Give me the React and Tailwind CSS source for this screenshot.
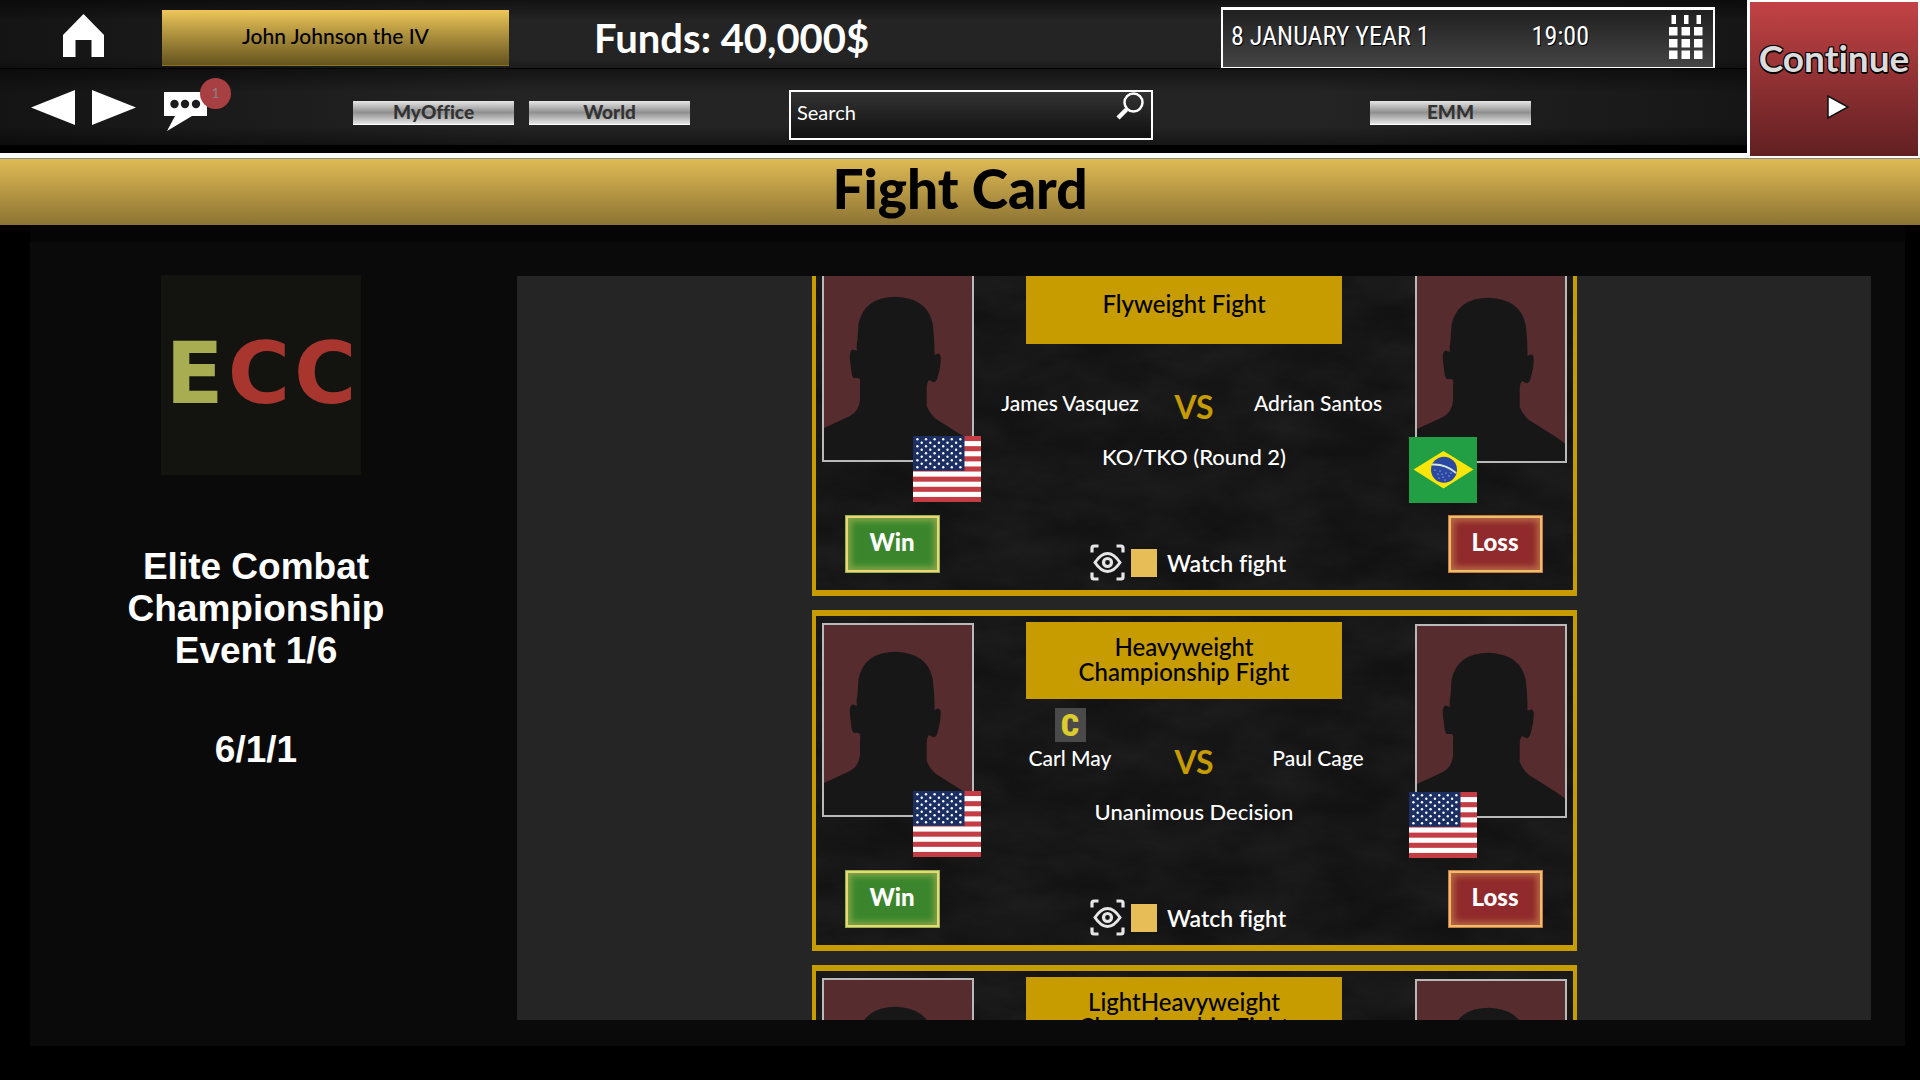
import React, { useState } from "react";

const FIGHTS = [
  {
    id: 1,
    title: ["Flyweight Fight"],
    left: { name: "James Vasquez", country: "US" },
    right: { name: "Adrian Santos", country: "BR" },
    method: "KO/TKO (Round 2)",
  },
  {
    id: 2,
    title: ["Heavyweight", "Championship Fight"],
    left: { name: "Carl May", country: "US", champion: true },
    right: { name: "Paul Cage", country: "US" },
    method: "Unanimous Decision",
  },
  {
    id: 3,
    title: ["LightHeavyweight", "Championship Fight"],
    left: { name: "", country: "US" },
    right: { name: "", country: "US" },
    method: "",
  },
];

function FlagUS() {
  const stars = [];
  for (let row = 0; row < 9; row++) {
    for (let col = row % 2; col < 11; col += 2) {
      stars.push(<circle key={`${row}-${col}`} cx={4.4 + col * 4.3} cy={3.2 + row * 3.5} r="1.2" fill="#fff" />);
    }
  }
  return (
    <svg viewBox="0 0 68 66" preserveAspectRatio="none" className="block w-full h-full">
      <rect width="68" height="66" fill="#fff" />
      {[0, 2, 4, 6, 8, 10, 12].map((i) => (
        <rect key={i} y={(i * 66) / 13} width="68" height={66 / 13} fill="#c43c44" />
      ))}
      <rect width="51.5" height="34.8" fill="#1b2f63" />
      {stars}
    </svg>
  );
}

function FlagBR() {
  return (
    <svg viewBox="0 0 68 66" preserveAspectRatio="none" className="block w-full h-full">
      <rect width="68" height="66" fill="#229e45" />
      <path d="M34.5 14 64.5 32.5 34.5 51.5 4.5 32.5Z" fill="#f8e509" />
      <circle cx="35" cy="32.7" r="13" fill="#2b49a3" />
      <path d="M22.5 27.6Q36 26.5 47.2 36" fill="none" stroke="#d5e8d0" strokeWidth="1.8" />
      {[[26, 33], [29, 37], [31, 34], [34, 40], [37, 36], [40, 39], [36, 43], [42, 36], [30, 41], [38, 30], [33, 37]].map(([x, y]) => (
        <circle key={`${x}-${y}`} cx={x} cy={y} r="0.6" fill="#dfe6f5" />
      ))}
    </svg>
  );
}

function Portrait({ country, side }) {
  return (
    <div className="relative w-[152px] h-[194px] border-2 border-[#b9b9b9] bg-[#562c2f]">
      <svg viewBox="2 2 148 190" className="block w-full h-full">
        <path
          fill="#171717"
          d="M2 160 28 148Q37 143 38 132L38 116Q39 110 36 110L32 110Q30 109 29.500 104L28 92Q27 82 31 81.500L35 83Q34 79 35.500 72L36.500 56Q42 29 74 28.700Q105 30 110.500 55Q112.500 68 112.500 87Q118 83 118.700 89Q119 98 116 108Q114.500 115 111 114L107 112Q104.500 115 104.700 122L104.700 138Q108 146 114 151L141 168 150 174.500 150 192 2 192Z"
        />
      </svg>
      <div className={side === "left" ? "absolute -right-[9px] -bottom-[42px] w-[68px] h-[66px]" : "absolute -left-2 -bottom-[42px] w-[68px] h-[66px]"}>
        {country === "BR" ? <FlagBR /> : <FlagUS />}
      </div>
    </div>
  );
}

function ResultButton({ win }) {
  return (
    <button
      type="button"
      className={
        win
          ? "w-[95px] h-[58px] mt-[53px] ml-[23px] border border-[#8fb350] bg-[#3b862c] text-white text-2xl font-black pb-1 shadow-[inset_0_0_0_2px_#ead673,inset_0_0_6px_5px_#86a548]"
          : "w-[95px] h-[58px] mt-[52px] mr-6 self-end border border-[#c87a48] bg-[#912a2c] text-white text-2xl font-black pb-1 shadow-[inset_0_0_0_2px_#eebd68,inset_0_0_6px_5px_#b86a45]"
      }
    >
      {win ? "Win" : "Loss"}
    </button>
  );
}

function EyeScan() {
  return (
    <svg viewBox="0 0 35 37" className="w-[35px] h-[37px]" fill="none" stroke="#e6e6e6" strokeWidth="3.2">
      <path d="M2 8.500V4Q2 2 4 2H8.500M26.500 2H31Q33 2 33 4V8.500M33 28.500V33Q33 35 31 35H26.500M8.500 35H4Q2 35 2 33V28.500" />
      <path d="M5 18.500Q11 9.500 17.500 9.500T30 18.500Q24 27.500 17.500 27.500T5 18.500Z" strokeWidth="3" />
      <circle cx="17.500" cy="18.500" r="4" />
    </svg>
  );
}

// worn-concrete noise behind every card
function CardTexture({ id }) {
  return (
    <svg className="absolute inset-0 w-full h-full" aria-hidden="true">
      <filter id={`grain-${id}`} x="0" y="0" width="100%" height="100%">
        <feTurbulence type="fractalNoise" baseFrequency="0.012 0.025" numOctaves="6" seed="7" />
        <feColorMatrix values="0 0 0 0 1  0 0 0 0 1  0 0 0 0 1  0.08 0 0 0 -0.02" />
      </filter>
      <rect width="100%" height="100%" filter={`url(#grain-${id})`} />
    </svg>
  );
}

function FightCard({ fight }) {
  const { left, right } = fight;
  return (
    <article className="relative shrink-0 w-[765px] h-[341px] border-x-4 border-y-[6px] border-[#c69c00] bg-[#121212]">
      <CardTexture id={fight.id} />
      <div className="relative flex justify-between h-full px-1.5 pt-1.5">
        <div className="flex flex-col pt-px">
          <Portrait country={left.country} side="left" />
          <ResultButton win />
        </div>

        <div className="flex-1 flex flex-col items-center pb-[9px] text-white">
          <h2 className="flex flex-col items-center justify-center w-[316px] h-[77px] mr-5 pb-1 shrink-0 bg-[#c69c00] text-black text-2xl leading-[25px] font-medium">
            {fight.title.map((line) => <span key={line}>{line}</span>)}
          </h2>
          <div className="grid grid-cols-[190px_58px_190px] justify-items-center mt-[9px] h-[34px] shrink-0">
            {left.champion && (
              <span className="w-[31px] h-[34px] bg-[#4a4a4a] text-[#dccb2e] text-[32px] leading-[34px] text-center font-black font-['Roboto_Condensed','Liberation_Sans',sans-serif]">C</span>
            )}
          </div>
          <div className="grid grid-cols-[190px_58px_190px] justify-items-center items-center h-7 text-[21px] font-medium">
            <span className="pb-1">{left.name}</span>
            <span className="pt-1 text-[32px] leading-8 font-bold text-[#c69c00]">VS</span>
            <span className="pb-1">{right.name}</span>
          </div>
          <p className="mt-[27px] text-[22px] leading-[30px] font-medium">{fight.method}</p>
          <label className="flex items-center mt-auto mr-3 text-[23px] leading-7 font-semibold">
            <EyeScan />
            <input type="checkbox" className="appearance-none w-[26px] h-7 ml-1.5 mr-2.5 bg-[#e6bd56]" />
            <span>Watch fight</span>
          </label>
        </div>

        <div className="flex flex-col pt-0.5">
          <Portrait country={right.country} side="right" />
          <ResultButton />
        </div>
      </div>
    </article>
  );
}

function NavButton({ children }) {
  return (
    <button
      type="button"
      className="w-[161px] h-6 pb-0.5 border-b border-white bg-linear-to-b from-[#e6e6e6] via-[#909090] to-[#e6e6e6] text-[#333] text-[19px] leading-5 font-black"
    >
      {children}
    </button>
  );
}

function Header() {
  const [query, setQuery] = useState("");

  return (
    <header className="flex bg-black text-white">
      <div className="flex-1 flex flex-col">
        <div className="flex items-center h-[68px] pt-2 pl-[63px] pr-8 bg-[linear-gradient(to_bottom,rgba(0,0,0,0.5),transparent_30%,transparent_85%,rgba(0,0,0,0.25)),linear-gradient(to_right,#141414,#242424_30%,#242424_75%,#161616)]">
          <a href="#home" aria-label="Home" className="mb-1.5">
            <svg viewBox="0 0 41 43" className="block w-[41px] h-[43px]" fill="#fff">
              <path d="M20.500 0 41 21V43H28.500V26H12.500V43H0V21Z" />
            </svg>
          </a>
          <button type="button" className="w-[347px] h-14 ml-[58px] pb-1 border-b border-[#8b7226] bg-linear-to-b from-[#eec75a] to-[#66541f] text-black text-[21px] font-medium">
            John Johnson the IV
          </button>
          <p className="ml-[85px] text-[40px] leading-[44px] font-bold">Funds: 40,000$</p>
          <div className="flex items-center w-[494px] h-[62px] ml-auto pl-2 pr-2.5 border-2 border-t-[3px] border-white bg-linear-to-b from-[#202020] to-[#454545] text-[26px] font-['Roboto_Condensed','Liberation_Sans',sans-serif] [text-shadow:1px_1px_0_#000]">
            <span className="pb-1">8 JANUARY YEAR 1</span>
            <span className="ml-auto pb-1">19:00</span>
            <button type="button" aria-label="Calendar" className="ml-20 mb-1">
              <svg viewBox="0 0 34 44" className="block w-[34px] h-11" fill="#fff">
                {[0, 12.500, 25].map((x) => (
                  <g key={x}>
                    <rect x={x + 2.500} y="0" width="4.500" height="9" />
                    <rect x={x} y="12" width="8.500" height="8.500" />
                    <rect x={x} y="24" width="8.500" height="8.500" />
                    <rect x={x} y="35.500" width="8.500" height="8.500" />
                  </g>
                ))}
              </svg>
            </button>
          </div>
        </div>

        <div className="flex items-center h-[77px] pt-3 pl-[31px] border-t border-black bg-[linear-gradient(to_bottom,rgba(0,0,0,0.45),transparent_30%,transparent_75%,rgba(0,0,0,0.4)),linear-gradient(to_right,#141414,#242424_30%,#242424_75%,#161616)]">
          <nav className="flex items-center pb-3">
            <button type="button" aria-label="Back">
              <svg viewBox="0 0 44 35" className="block w-11 h-[35px]" fill="#fff"><path d="M44 0V35L0 17.500Z" /></svg>
            </button>
            <button type="button" aria-label="Forward" className="ml-[17px]">
              <svg viewBox="0 0 44 35" className="block w-11 h-[35px]" fill="#fff"><path d="M0 0V35L44 17.500Z" /></svg>
            </button>
            <button type="button" aria-label="Messages" className="relative ml-7 mt-2">
              <svg viewBox="0 0 43 39" className="block w-[43px] h-[39px]">
                <path d="M0 0H43V24H28L3 39 11 24H0Z" fill="#fff" />
                <circle cx="10.500" cy="12" r="4.200" fill="#1c1c1c" />
                <circle cx="21" cy="12" r="4.200" fill="#1c1c1c" />
                <circle cx="32" cy="12" r="4.200" fill="#1c1c1c" />
              </svg>
              <span className="absolute -top-3.5 -right-6 flex items-center justify-center w-[31px] h-[31px] rounded-full bg-[#a84043] text-[#8f7f80] text-sm">1</span>
            </button>
          </nav>
          <div className="flex gap-[15px] ml-[146px]">
            <NavButton>MyOffice</NavButton>
            <NavButton>World</NavButton>
          </div>
          <div className="flex items-start w-[364px] h-[50px] ml-[99px] mt-1 pr-1.5 border-2 border-white bg-linear-to-b from-[#333] to-[#111]">
            <input
              type="text"
              aria-label="Search"
              placeholder="Search"
              value={query}
              onChange={(e) => setQuery(e.target.value)}
              className="flex-1 min-w-0 h-10 pl-1.5 bg-transparent text-xl text-white placeholder:text-white outline-none"
            />
            <svg viewBox="0 0 29 28" className="w-[29px] h-7" fill="none" stroke="#fff">
              <circle cx="17.500" cy="10.500" r="9" strokeWidth="2.500" />
              <path d="M10.500 17.500 2 26" strokeWidth="4.500" />
            </svg>
          </div>
          <div className="ml-auto mr-[216px]">
            <NavButton>EMM</NavButton>
          </div>
        </div>
      </div>

      <button
        type="button"
        className="flex flex-col items-center w-[173px] h-[158px] pt-[34px] border-2 border-l-[3px] border-white bg-linear-to-b from-[#c34345] to-[#622022] text-[#dcdcdc] text-[37px] leading-11 font-bold [text-shadow:1px_1px_0_#000,-1px_-1px_0_#000,1px_-1px_0_#000,-1px_1px_0_#000,0_2px_0_#000]"
      >
        Continue
        <svg viewBox="0 0 24 26" className="w-6 h-[26px] mt-3.5 ml-2"><path d="M2 2V24L22 13Z" fill="#fff" stroke="#111" strokeWidth="1.500" /></svg>
      </button>
    </header>
  );
}

export default function App() {
  return (
    <div className="flex flex-col h-screen overflow-hidden bg-black font-['Lato',sans-serif] [font-variant-ligatures:none]">
      <div className="flex flex-col">
        <Header />
        <div className="-mt-[5px] h-[5px] mr-[173px] bg-white" />
      </div>
      <h1 className="h-[67px] border-t border-[#8a8a8a] bg-linear-to-b from-[#e0bb54] to-[#8d7434] text-center text-black text-[55px] leading-[58px] font-black">
        Fight Card
      </h1>

      <main className="flex-1 min-h-0 flex ml-[30px] mr-[15px] mb-[34px] border-t-[17px] border-[#050505] bg-[#0a0a0a]">
        <aside className="flex flex-col items-center w-[452px] mr-[35px] pt-[33px] shrink-0 text-white">
          <div className="pl-2.5">
            <div className="flex items-center justify-center gap-1 w-[200px] h-[200px] pb-1 bg-[#13140f] text-[85px] leading-none font-bold font-['DejaVu_Sans',sans-serif]">
              <span className="text-[#a9ad52]">E</span>
              <span className="text-[#a8362f]">C</span>
              <span className="text-[#a8362f]">C</span>
            </div>
          </div>
          <p className="mt-[71px] text-center text-[37px] leading-[42px] font-bold font-['Liberation_Sans',sans-serif]">
            Elite Combat<br />Championship<br />Event 1/6
          </p>
          <p className="mt-[57px] text-[37px] leading-[42px] font-bold font-['Liberation_Sans',sans-serif]">6/1/1</p>
        </aside>

        <section className="flex-1 min-w-0 mt-[34px] mb-[26px] mr-[34px] overflow-y-auto [scrollbar-width:none] bg-[#252525]">
          <div className="flex flex-col items-center gap-3.5 -mt-[21px]">
            {FIGHTS.map((f) => <FightCard key={f.id} fight={f} />)}
          </div>
        </section>
      </main>
    </div>
  );
}
